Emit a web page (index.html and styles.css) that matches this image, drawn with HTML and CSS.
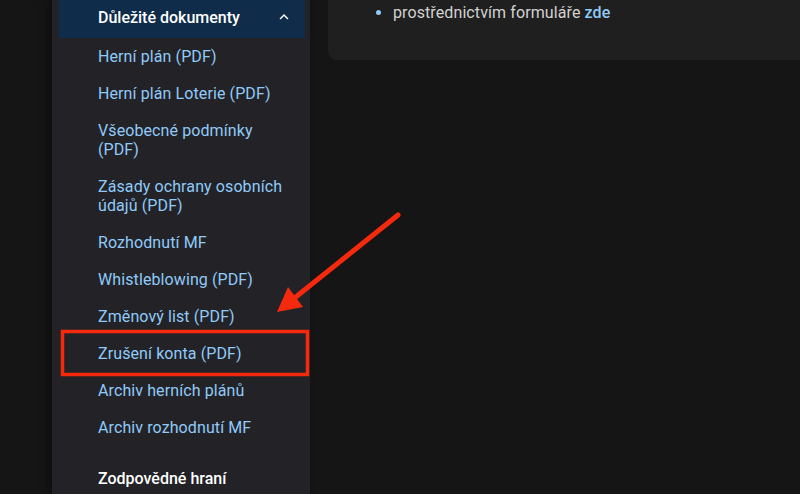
FILE: index.html
```html
<!DOCTYPE html>
<html lang="cs">
  <head>
    <meta charset="UTF-8" />
    <meta name="viewport" content="width=device-width, initial-scale=1.0" />
    <title>Důležité dokumenty</title>
    <link rel="stylesheet" href="styles.css">
  </head>
  <body>
    <div class="page">
      <aside class="sidebar">
        <div class="group-head">
          <span>Důležité dokumenty</span>
          <svg class="chevron" width="18" height="18" viewBox="0 0 24 24">
            <path d="M7.41 15.41 12 10.83l4.59 4.58L18 14l-6-6-6 6z" fill="#fff" />
          </svg>
        </div>
        <ul class="docs">
          <li><a href="#">Herní plán (PDF)</a></li>
          <li><a href="#">Herní plán Loterie (PDF)</a></li>
          <li><a href="#">Všeobecné podmínky (PDF)</a></li>
          <li><a href="#">Zásady ochrany osobních údajů (PDF)</a></li>
          <li><a href="#">Rozhodnutí MF</a></li>
          <li><a href="#">Whistleblowing (PDF)</a></li>
          <li><a href="#">Změnový list (PDF)</a></li>
          <li><a href="#">Zrušení konta (PDF)</a></li>
          <li><a href="#">Archiv herních plánů</a></li>
          <li><a href="#">Archiv rozhodnutí MF</a></li>
        </ul>
        <div class="group-title">Zodpovědné hraní</div>
      </aside>
      <main class="content">
        <div class="card">
          <ul class="bullets">
            <li>prostřednictvím formuláře <a href="#">zde</a></li>
          </ul>
        </div>
      </main>
    </div>

    <!-- anotace -->
    <svg class="annotation" width="800" height="494" viewBox="0 0 800 494">
      <rect x="62.5" y="331.5" width="245" height="43" fill="none" stroke="#f5290e" stroke-width="3.5" />
      <line x1="398" y1="215" x2="292" y2="300" stroke="#f5290e" stroke-width="5" stroke-linecap="round" />
      <polygon points="277,312 288,287 303,307" fill="#f5290e" />
    </svg>
  </body>
</html>
```

FILE: styles.css
```css
body {
  margin: 0;
  padding: 0;
  background-color: #151515;
  font-family: Roboto, "Liberation Sans", sans-serif;
  overflow: hidden;
}
a {
  text-decoration: none;
}
.page {
  display: flex;
  height: 494px;
  padding-left: 52px;
  gap: 18px;
}
.sidebar {
  width: 258px;
  flex-shrink: 0;
  background-color: #232327;
  box-shadow: -4px 0 8px rgba(0, 0, 0, 0.35);
}
.group-head {
  display: flex;
  align-items: center;
  justify-content: space-between;
  height: 38px;
  margin: 0 5px 0 7px;
  padding: 0 12px 4px 39px;
  box-sizing: border-box;
  background-color: #0f2d4b;
  color: #fff;
  font-size: 16px;
  font-weight: 500;
}
.chevron {
  display: block;
}
.docs {
  list-style: none;
  margin: 0;
  padding: 0;
}
.docs li {
  padding: 9px 22px 9px 46px;
  font-size: 16px;
  line-height: 19px;
  letter-spacing: 0.1px;
}
.docs a {
  color: #90caf9;
}
.group-title {
  margin-top: 23px;
  padding-left: 46px;
  color: #fff;
  font-size: 16px;
  font-weight: 500;
  line-height: 19px;
}
.content {
  flex: 1;
}
.card {
  background-color: #1f1f1f;
  border-radius: 0 0 0 9px;
  height: 60px;
  box-sizing: border-box;
}
.bullets {
  margin: 0;
  padding: 3px 0 0 65px;
  color: #d2d2d2;
  font-size: 16px;
  line-height: 19px;
  letter-spacing: 0.1px;
}
.bullets li::marker {
  color: #90caf9;
}
.bullets a {
  color: #90caf9;
  font-weight: 500;
}
.annotation {
  position: absolute;
  top: 0;
  left: 0;
  pointer-events: none;
}
```
